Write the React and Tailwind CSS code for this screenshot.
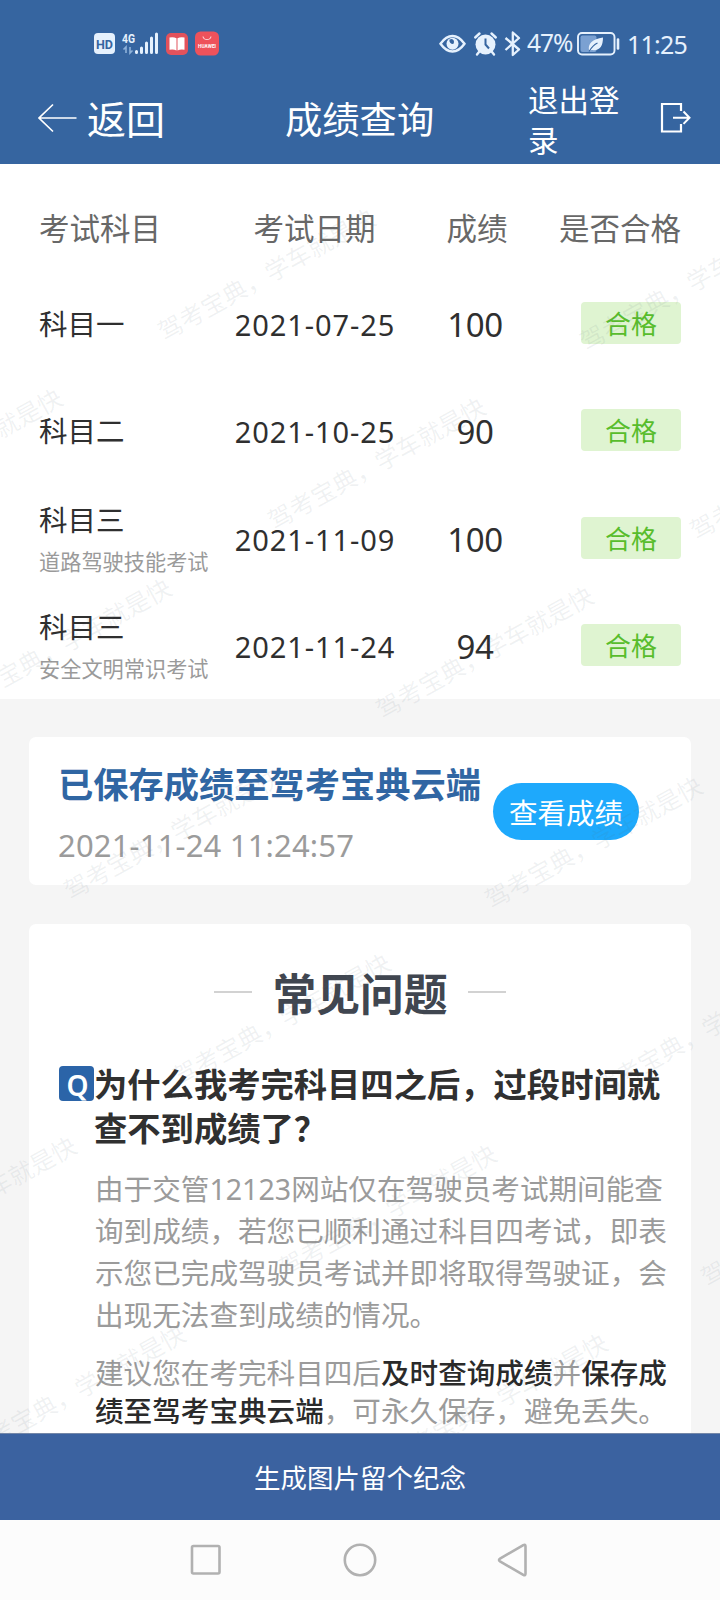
const results = [
  { subject: "科目一", date: "2021-07-25", score: 100 },
  { subject: "科目二", date: "2021-10-25", score: 90 },
  { subject: "科目三", note: "道路驾驶技能考试", date: "2021-11-09", score: 100 },
  { subject: "科目三", note: "安全文明常识考试", date: "2021-11-24", score: 94 },
];

// Watermark rows: first character of each stamp, relative to the scroll area
const watermarks = [
  [170, 163],
  [592, 173],
  [-143, 343],
  [280, 352],
  [702, 362],
  [-34, 533],
  [388, 541],
  [76, 722],
  [497, 731],
  [185, 908],
  [607, 919],
  [-129, 1091],
  [291, 1099],
  [713, 1109],
  [-20, 1279],
  [402, 1288],
];

function StatusBar() {
  return (
    <div className="flex h-[76px] items-center pt-[11px] text-[#e6f1fd]">
      {/* Left icons */}
      <svg className="ml-[93px] shrink-0" width="130" height="28" viewBox="0 0 130 28">
        <rect x="1" y="3" width="21" height="21" rx="4" fill="#e6f1fd" />
        <text x="11.5" y="18.5" textAnchor="middle" fontSize="13.5" fontWeight="700" fill="#3665a0" fontFamily="Roboto, sans-serif" textLength="17" lengthAdjust="spacingAndGlyphs">
          HD
        </text>
        <text x="29" y="12.5" fontSize="13.5" fontWeight="700" fill="#e6f1fd" fontFamily="Roboto, sans-serif" textLength="13" lengthAdjust="spacingAndGlyphs">
          4G
        </text>
        <g stroke="#8fb2da" strokeWidth="1.6" fill="none">
          <path d="M33 23v-6l-2.5 2.5M37 17v6l2.5-2.5" />
        </g>
        <g stroke="#e6f1fd" strokeWidth="3" strokeLinecap="round">
          <path d="M43.5 21.5v1M48.5 18v4.5M53.5 13v9.5M58.5 8v14.5M63.5 4v18.5" />
        </g>
        <rect x="73" y="3" width="22" height="22" rx="5" fill="#e2525c" />
        <path d="M76.5 7.500q4-1 7 .8v12.200q-3-1.700-7-.8zM91.5 7.500q-4-1-7 .8v12.200q3-1.700 7-.8z" fill="#fff" />
        <rect x="102" y="1.5" width="24" height="24" rx="5.5" fill="#ee525b" />
        <path d="M110 6.500q0.500 3 4 3t4-3" fill="none" stroke="#fbd0d2" strokeWidth="1.1" />
        <text x="114" y="17.5" textAnchor="middle" fontSize="4.8" fontWeight="700" fill="#fff" fontFamily="Roboto, sans-serif" textLength="18">
          HUAWEI
        </text>
      </svg>

      {/* Right icons */}
      <svg className="ml-[215px] shrink-0" width="86" height="28" viewBox="0 0 86 28">
        <path d="M2.500 13.700Q8 6 14.500 6t12 7.700Q21 21.500 14.500 21.500t-12-7.800z" fill="none" stroke="#e6f1fd" strokeWidth="2.4" />
        <circle cx="14.5" cy="13.7" r="6" fill="#e6f1fd" />
        <path d="M11.500 9.500a3.500 3.500 0 0 0 3.800 4.400 3.500 3.500 0 0 0-1.300-4.900z" fill="#3665a0" />
        <circle cx="47.5" cy="14.5" r="10" fill="#e6f1fd" />
        <path d="M41 22l-2 2.500M54 22l2 2.500M37.200 7.500l4.300-4M57.800 7.500l-4.300-4" stroke="#e6f1fd" strokeWidth="2.4" strokeLinecap="round" />
        <path d="M47.500 8.500v6l3.500 4" fill="none" stroke="#3665a0" strokeWidth="2" />
        <path d="M67.500 8l13.500 11.500-6.200 5.500V2.500L81 8 67.500 20" fill="none" stroke="#e6f1fd" strokeWidth="2.3" strokeLinejoin="round" />
      </svg>
      <span className="ml-[3px] w-[46px] whitespace-nowrap text-[24.5px] leading-none tracking-[-1px]">47%</span>
      <svg className="ml-[4px] shrink-0" width="44" height="28" viewBox="0 0 44 28">
        <rect x="1" y="3" width="36.5" height="21.5" rx="4" fill="none" stroke="#e6f1fd" strokeWidth="1.9" />
        <rect x="3.5" y="5.5" width="16" height="16.5" rx="2" fill="#7ba1d2" />
        <path d="M12 20.500Q10 10 26 7.500q0 14-11 12.500z" fill="#e6f1fd" />
        <path d="M12 21.500q4-6.500 8.500-8.500" fill="none" stroke="#3665a0" strokeWidth="1.1" />
        <path d="M41 9.500v9" stroke="#e6f1fd" strokeWidth="2.6" strokeLinecap="round" />
      </svg>
      <span className="ml-[6px] pt-[2px] whitespace-nowrap text-[25px] leading-none tracking-[-0.8px]">11:25</span>
    </div>
  );
}

function Header() {
  return (
    <header className="h-[164px] shrink-0 bg-[#3665a0] text-white">
      <StatusBar />
      <div className="flex h-[84px] items-center">
        <svg className="ml-[37px] shrink-0" width="41" height="30" viewBox="0 0 41 30">
          <path d="M16 1.500L2 15l14 13.500M2 15h37.500" fill="none" stroke="#fff" strokeWidth="1.7" />
        </svg>
        <span className="ml-[9px] w-[79px] pt-[1px] text-[39px] leading-none">返回</span>
        <h1 className="ml-[119px] w-[150px] pt-[4px] text-[37.3px] leading-none">成绩查询</h1>
        <span className="ml-[93px] w-[94px] pt-[3px] text-[30.5px] leading-[40px]">退出登录</span>
        <svg className="ml-[38px] shrink-0" width="32" height="32" viewBox="0 0 32 32">
          <path d="M21 9V2H2v27.500h19V22" fill="none" stroke="#fff" strokeWidth="2.2" />
          <path d="M13 15.700h16M23.500 9.500l6 6.200-6 6.200" fill="none" stroke="#fff" strokeWidth="2" />
        </svg>
      </div>
    </header>
  );
}

function ScoreTable() {
  return (
    <section className="bg-white pr-[39px] pl-[39px]">
      <div className="grid h-[106px] grid-cols-[190px_171px_154px_1fr] items-center pt-[22px] text-[30.5px] leading-none text-[#686868]">
        <span>考试科目</span>
        <span className="text-center">考试日期</span>
        <span className="text-center">成绩</span>
        <span className="justify-self-end whitespace-nowrap">是否合格</span>
      </div>

      {results.map((item) => (
        <div
          key={item.date}
          className="grid h-[107.25px] grid-cols-[190px_172px_148px_1fr] items-center text-[#2f2f2f]"
        >
          <div className={item.note ? "pt-[8px]" : "pt-[1px]"}>
            <p className="text-[28.5px] leading-[40px]">{item.subject}</p>
            {item.note && (
              <p className="text-[21.2px] leading-[44px] whitespace-nowrap text-[#9a9a9a]">
                {item.note}
              </p>
            )}
          </div>
          <span className="pt-[2px] text-center text-[29px] leading-none tracking-[0.9px] whitespace-nowrap">
            {item.date}
          </span>
          <span className="pt-[2px] text-center text-[33px] leading-none tracking-[-0.4px]">{item.score}</span>
          <span className="mb-px flex h-[42px] w-[100px] items-center justify-center justify-self-end rounded bg-[#dff4d1] pt-[2px] text-[26px] leading-none text-[#58bd2c]">
            合格
          </span>
        </div>
      ))}
    </section>
  );
}

function SavedCard() {
  return (
    <section className="mx-[29px] mt-[38px] flex h-[148px] rounded-[7px] bg-white pl-[29px]">
      <div className="w-[435px] pt-[23px]">
        <h2 className="text-[35.25px] leading-[48px] font-bold whitespace-nowrap text-[#3066a3]">
          已保存成绩至驾考宝典云端
        </h2>
        <p className="mt-[13px] text-[31px] leading-[48px] tracking-[0.17px] whitespace-nowrap text-[#9b9b9b]">
          2021-11-24 11:24:57
        </p>
      </div>
      <button className="mt-[46px] flex h-[57px] w-[146px] items-center justify-center rounded-full bg-[#1ea9fc] pt-[3px] text-[28.5px] leading-none text-white">
        查看成绩
      </button>
    </section>
  );
}

function Faq() {
  return (
    <section className="mx-[29px] mt-[39px] h-[700px] rounded-t-[7px] bg-white pt-[37px]">
      <div className="flex items-center justify-center gap-[20px]">
        <span className="h-[2px] w-[38.5px] bg-[#d2d2d2]" />
        <h2 className="pt-[4px] text-[43.8px] leading-[58px] font-bold text-[#404650]">常见问题</h2>
        <span className="h-[2px] w-[38.5px] bg-[#d2d2d2]" />
      </div>

      <div className="mt-[39px] flex pl-[30px]">
        <span className="mt-[4px] flex h-[35px] w-[35px] shrink-0 items-end justify-center overflow-hidden rounded bg-[#2b64a8] pl-[2px] text-[28px] leading-[31px] font-semibold text-white">
          Q
        </span>
        <div className="w-[575px]">
          <h3 className="text-[33.3px] leading-[44px] font-bold text-[#303030]">
            为什么我考完科目四之后，过段时间就
            <br />
            查不到成绩了？
          </h3>
          <p className="mt-[18px] ml-px text-[28.6px] leading-[42px] whitespace-nowrap text-[#9b9b9b]">
            由于交管12123网站仅在驾驶员考试期间能查
            <br />
            询到成绩，若您已顺利通过科目四考试，即表
            <br />
            示您已完成驾驶员考试并即将取得驾驶证，会
            <br />
            出现无法查到成绩的情况。
          </p>
          <p className="mt-[18px] ml-px text-[28.6px] leading-[38px] whitespace-nowrap text-[#9b9b9b]">
            建议您在考完科目四后<b className="font-medium text-[#2a2a2a]">及时查询成绩</b>并
            <b className="font-medium text-[#2a2a2a]">保存成</b>
            <br />
            <b className="font-medium text-[#2a2a2a]">绩至驾考宝典云端</b>，可永久保存，避免丢失。
          </p>
        </div>
      </div>
    </section>
  );
}

function Watermark() {
  return (
    <div className="pointer-events-none absolute inset-0 overflow-hidden">
      {watermarks.map(([x, y]) => (
        <span
          key={`${x}-${y}`}
          className="absolute origin-[12px_12px] -rotate-29 text-[24.4px] leading-[25px] whitespace-nowrap text-[#5a6e78]/9"
          style={{ left: x - 12, top: y - 12 }}
        >
          驾考宝典，学车就是快
        </span>
      ))}
    </div>
  );
}

function NavBar() {
  return (
    <nav className="flex h-[80px] shrink-0 items-center justify-center gap-[120px] bg-[#fcfcfc]">
      <svg width="34" height="34" viewBox="0 0 34 34" fill="none" stroke="#b1b1b1" strokeWidth="2.6">
        <rect x="3" y="3" width="27.5" height="27.5" rx="1.5" />
      </svg>
      <svg width="34" height="34" viewBox="0 0 34 34" fill="none" stroke="#b1b1b1" strokeWidth="2.6">
        <circle cx="17" cy="17" r="15.2" />
      </svg>
      <svg width="34" height="34" viewBox="0 0 34 34" fill="none" stroke="#b1b1b1" strokeWidth="2.6" strokeLinejoin="round">
        <path d="M28.500 3.500q0-2.500-2.200-1.300L3 15.600q-2 1.400 0 2.800l23.300 13.400q2.200 1.200 2.200-1.300z" />
      </svg>
    </nav>
  );
}

export default function App() {
  return (
    <div className="flex h-[1600px] w-[720px] flex-col overflow-hidden bg-[#f5f5f5] font-['Noto_Sans','Noto_Sans_CJK_SC',sans-serif]">
      <Header />

      <main className="relative h-[1269px] shrink-0 overflow-hidden">
        <ScoreTable />
        <SavedCard />
        <Faq />
        <Watermark />
      </main>

      {/* Bottom action */}
      <button className="flex h-[87px] shrink-0 items-center justify-center border-t border-[#7487a8] bg-[#3b62a0] pt-[2px] text-[26.5px] leading-none text-white">
        生成图片留个纪念
      </button>
      <NavBar />
    </div>
  );
}
